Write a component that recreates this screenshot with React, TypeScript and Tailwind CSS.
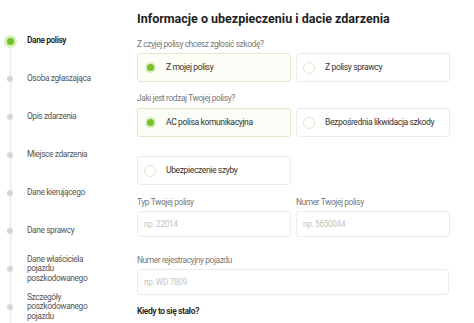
import React from 'react';

type Step = {
  label: string[];
  active?: boolean;
};

const steps: Step[] = [
  { label: ['Dane polisy'], active: true },
  { label: ['Osoba zgłaszająca'] },
  { label: ['Opis zdarzenia'] },
  { label: ['Miejsce zdarzenia'] },
  { label: ['Dane kierującego'] },
  { label: ['Dane sprawcy'] },
  { label: ['Dane właściciela', 'pojazdu', 'poszkodowanego'] },
  { label: ['Szczegóły', 'poszkodowanego', 'pojazdu'] },
];

const Radio = ({ checked }: { checked?: boolean }) =>
  checked ? (
    <span className="w-[11px] h-[11px] rounded-full bg-[#d9efbf] flex items-center justify-center shrink-0">
      <span className="w-[7px] h-[7px] rounded-full bg-[#78c22a]" />
    </span>
  ) : (
    <span className="w-[12px] h-[12px] rounded-full border border-[#dfe8c8] bg-white shrink-0" />
  );

const Option = ({ text, checked }: { text: string; checked?: boolean }) => (
  <div
    className={`w-[154px] h-[29px] rounded-[3px] border flex items-center pl-[6px] ${
      checked ? 'border-[#dcebc4] bg-[#fbfdf6]' : 'border-[#ececec] bg-white'
    }`}
  >
    <span className="w-[12px] flex justify-center">
      <Radio checked={checked} />
    </span>
    <span className="ml-[10px] text-[8.6px] tracking-[-0.4px] text-[#333] whitespace-nowrap">{text}</span>
  </div>
);

const Field = ({ label, placeholder, wide }: { label: string; placeholder: string; wide?: boolean }) => (
  <div className={wide ? 'w-[312px]' : 'w-[154px]'}>
    <div className="text-[8.4px] tracking-[-0.4px] text-[#777] h-[12px] leading-[12px]">{label}</div>
    <div className="mt-[3px] h-[26px] rounded-[3px] border border-[#ececec] bg-white flex items-center pl-[6px] text-[8.2px] tracking-[-0.3px] text-[#c4c4c4]">
      {placeholder}
    </div>
  </div>
);

const App = () => {
  return (
    <div className="w-[474px] h-[323px] overflow-hidden bg-white flex" style={{ fontFamily: 'Roboto, sans-serif' }}>
      {/* Sidebar */}
      <div className="w-[137px] shrink-0 relative pt-[22px]">
        <div className="absolute left-[8.5px] top-[41px] bottom-0 w-[3px] bg-[#f3f3f3]" />
        {steps.map((s) => (
          <div key={s.label.join(' ')} className="h-[38px] flex items-center relative">
            <div className="w-[20px] flex justify-center">
              {s.active ? (
                <span className="w-[13px] h-[13px] rounded-full bg-[#d7efbb] flex items-center justify-center">
                  <span className="w-[7px] h-[7px] rounded-full bg-[#72c026]" />
                </span>
              ) : (
                <span className="w-[6px] h-[6px] rounded-full bg-[#d6d6d6]" />
              )}
            </div>
            <div
              className={`ml-[7px] text-[8.4px] tracking-[-0.4px] leading-[9.5px] ${
                s.active ? 'font-semibold text-[#222]' : 'text-[#555]'
              }`}
            >
              {s.label.map((l) => (
                <div key={l}>{l}</div>
              ))}
            </div>
          </div>
        ))}
      </div>

      {/* Main */}
      <div className="flex-1 pt-[11px]">
        <h1 className="text-[12.5px] font-bold text-[#222] h-[15px] leading-[15px] whitespace-nowrap">
          Informacje o ubezpieczeniu i dacie zdarzenia
        </h1>

        <div className="mt-[12px] text-[8.4px] tracking-[-0.4px] text-[#777] h-[12px] leading-[12px]">
          Z czyjej polisy chcesz zgłosić szkodę?
        </div>
        <div className="mt-[3px] flex gap-[5px]">
          <Option text="Z mojej polisy" checked />
          <Option text="Z polisy sprawcy" />
        </div>

        <div className="mt-[10px] text-[8.4px] tracking-[-0.4px] text-[#777] h-[12px] leading-[12px]">
          Jaki jest rodzaj Twojej polisy?
        </div>
        <div className="mt-[4px] flex gap-[5px]">
          <Option text="AC polisa komunikacyjna" checked />
          <Option text="Bezpośrednia likwidacja szkody" />
        </div>
        <div className="mt-[19px] flex">
          <Option text="Ubezpieczenie szyby" />
        </div>

        <div className="mt-[11px] flex gap-[5px]">
          <Field label="Typ Twojej polisy" placeholder="np. 22014" />
          <Field label="Numer Twojej polisy" placeholder="np. 5650044" />
        </div>

        <div className="mt-[17px]">
          <Field label="Numer rejestracyjny pojazdu" placeholder="np. WD 7809" wide />
        </div>

        <div className="mt-[10px] text-[8.5px] tracking-[-0.4px] font-semibold text-[#222] h-[12px] leading-[12px]">
          Kiedy to się stało?
        </div>
      </div>
    </div>
  );
};

export default App;
